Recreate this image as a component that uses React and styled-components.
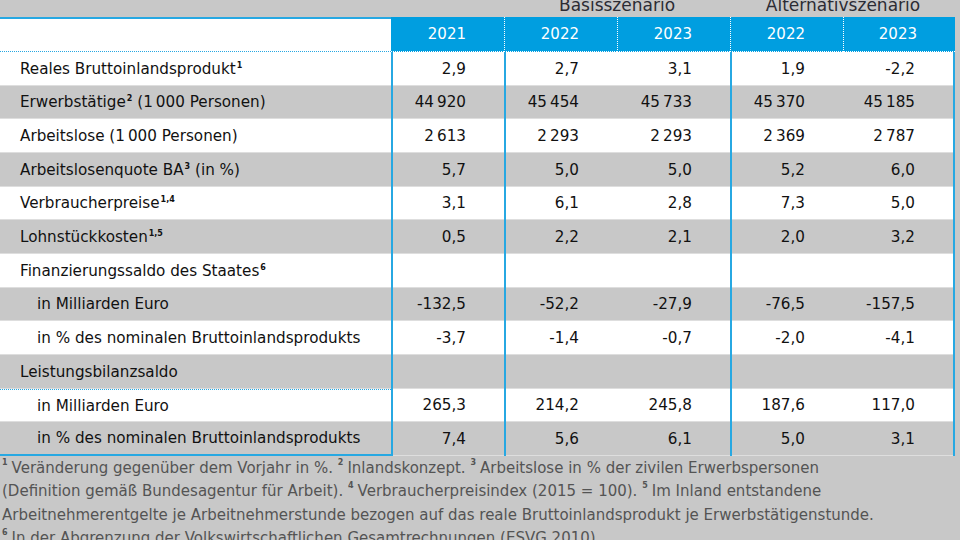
import React from 'react';
import styled, { createGlobalStyle } from 'styled-components';

const GlobalStyle = createGlobalStyle`
  html, body {
    margin: 0;
    padding: 0;
    background: #c8c8c8;
  }
`;

const BLUE = '#009ee0';
const LINE = '#27a8e2';
const COLS = '391px 113px 113px 113px 113px 112px';

const Page = styled.div`
  width: 960px;
  height: 540px;
  overflow: hidden;
  background: #c8c8c8;
  font-family: 'DejaVu Sans', Verdana, sans-serif;
  color: #111;
`;

const ScenarioBar = styled.div`
  display: grid;
  grid-template-columns: 391px 113px 226px 226px;
  height: 17px;
`;

const ScenarioLabel = styled.div`
  grid-column: ${(p) => p.$col};
  text-align: center;
  font-size: 17px;
  line-height: 10px;
  color: #2c2c34;
  white-space: nowrap;
`;

const Table = styled.div`
  width: 955px;
`;

const HeaderRow = styled.div`
  display: grid;
  grid-template-columns: ${COLS};
  height: 35px;
`;

const HeaderLabel = styled.div`
  background: #fff;
  border-top: 2px solid ${LINE};
  border-bottom: 1px dotted ${LINE};
`;

const HeaderYear = styled.div`
  background: ${BLUE};
  color: #fff;
  font-size: 15px;
  text-align: right;
  padding: 0 38px 0 0;
  line-height: 34px;
  border-bottom: 1px dotted #fff;
  border-left: ${(p) => (p.$first ? 'none' : '1px dotted #fff')};
  box-sizing: border-box;
`;

const Row = styled.div`
  display: grid;
  grid-template-columns: ${COLS};
  height: 33.67px;
  background: ${(p) => (p.$shaded ? '#c8c8c8' : '#fff')};
  box-shadow: inset 0 -1px 0 #dedede;
  font-size: 15.2px;
`;

const LabelCell = styled.div`
  display: flex;
  align-items: center;
  padding-left: ${(p) => (p.$indent ? '37px' : '20px')};
  white-space: nowrap;
  box-sizing: border-box;
  border-top: ${(p) => (p.$selTop ? `1px dotted ${LINE}` : 'none')};
  border-bottom: ${(p) => (p.$selBottom ? `2px solid ${LINE}` : 'none')};
`;

const LabelText = styled.span`
  line-height: 18px;
`;

const ValueCell = styled.div`
  display: flex;
  align-items: center;
  justify-content: flex-end;
  padding-right: 38px;
  box-sizing: border-box;
  border-left: ${(p) => (p.$divider ? `2px solid ${LINE}` : 'none')};
  border-right: ${(p) => (p.$edge ? `2px solid ${LINE}` : 'none')};
  white-space: nowrap;
`;

const Sup = styled.sup`
  font-size: 8px;
  font-weight: bold;
  vertical-align: 6px;
  line-height: 0;
  margin-left: 1px;
`;

const Notes = styled.div`
  margin-top: 1px;
  padding-left: 2px;
  font-size: 15px;
  line-height: 23.4px;
  color: #545454;
`;

const NoteLine = styled.div`
  white-space: nowrap;
`;

const NoteSup = styled.sup`
  font-size: 8px;
  font-weight: bold;
  vertical-align: 8px;
  line-height: 0;
  margin-right: 4px;
`;

const nb = (s) => s.replace(/ /g, '\u202F');

const rows = [
  { label: 'Reales Bruttoinlandsprodukt', sup: '1', values: ['2,9', '2,7', '3,1', '1,9', '-2,2'] },
  { label: 'Erwerbstätige', sup: '2', after: '(1\u202F000 Personen)', values: ['44 920', '45 454', '45 733', '45 370', '45 185'] },
  { label: 'Arbeitslose (1\u202F000 Personen)', values: ['2 613', '2 293', '2 293', '2 369', '2 787'] },
  { label: 'Arbeitslosenquote BA', sup: '3', after: '(in %)', values: ['5,7', '5,0', '5,0', '5,2', '6,0'] },
  { label: 'Verbraucherpreise', sup: '1,4', values: ['3,1', '6,1', '2,8', '7,3', '5,0'] },
  { label: 'Lohnstückkosten', sup: '1,5', values: ['0,5', '2,2', '2,1', '2,0', '3,2'] },
  { label: 'Finanzierungssaldo des Staates', sup: '6', values: ['', '', '', '', ''] },
  { label: 'in Milliarden Euro', indent: true, values: ['-132,5', '-52,2', '-27,9', '-76,5', '-157,5'] },
  { label: 'in % des nominalen Bruttoinlandsprodukts', indent: true, values: ['-3,7', '-1,4', '-0,7', '-2,0', '-4,1'] },
  { label: 'Leistungsbilanzsaldo', values: ['', '', '', '', ''] },
  { label: 'in Milliarden Euro', indent: true, selTop: true, values: ['265,3', '214,2', '245,8', '187,6', '117,0'] },
  { label: 'in % des nominalen Bruttoinlandsprodukts', indent: true, selBottom: true, values: ['7,4', '5,6', '6,1', '5,0', '3,1'] },
];

const years = ['2021', '2022', '2023', '2022', '2023'];
const dividers = [true, true, false, true, false];

export default function App() {
  return (
    <Page>
      <GlobalStyle />
      <ScenarioBar>
        <ScenarioLabel $col={3}>Basisszenario</ScenarioLabel>
        <ScenarioLabel $col={4}>Alternativszenario</ScenarioLabel>
      </ScenarioBar>
      <Table>
        <HeaderRow>
          <HeaderLabel />
          {years.map((y, i) => (
            <HeaderYear key={i} $first={i === 0}>{y}</HeaderYear>
          ))}
        </HeaderRow>
        {rows.map((r, i) => (
          <Row key={i} $shaded={i % 2 === 1}>
            <LabelCell $indent={r.indent} $selTop={r.selTop} $selBottom={r.selBottom}>
              <LabelText>
                {r.label}
                {r.sup ? <Sup>{r.sup}</Sup> : null}
                {r.after ? <>&nbsp;{r.after}</> : null}
              </LabelText>
            </LabelCell>
            {r.values.map((v, j) => (
              <ValueCell key={j} $divider={dividers[j]} $edge={j === 4}>
                {nb(v)}
              </ValueCell>
            ))}
          </Row>
        ))}
      </Table>
      <Notes>
        <NoteLine>
          <NoteSup>1</NoteSup>Veränderung gegenüber dem Vorjahr in %. <NoteSup>2</NoteSup>Inlandskonzept.{' '}
          <NoteSup>3</NoteSup>Arbeitslose in % der zivilen Erwerbspersonen
        </NoteLine>
        <NoteLine>
          (Definition gemäß Bundesagentur für Arbeit). <NoteSup>4</NoteSup>Verbraucherpreisindex (2015 = 100).{' '}
          <NoteSup>5</NoteSup>Im Inland entstandene
        </NoteLine>
        <NoteLine>
          Arbeitnehmerentgelte je Arbeitnehmerstunde bezogen auf das reale Bruttoinlandsprodukt je Erwerbstätigenstunde.
        </NoteLine>
        <NoteLine>
          <NoteSup>6</NoteSup>In der Abgrenzung der Volkswirtschaftlichen Gesamtrechnungen (ESVG 2010).
        </NoteLine>
      </Notes>
    </Page>
  );
}
